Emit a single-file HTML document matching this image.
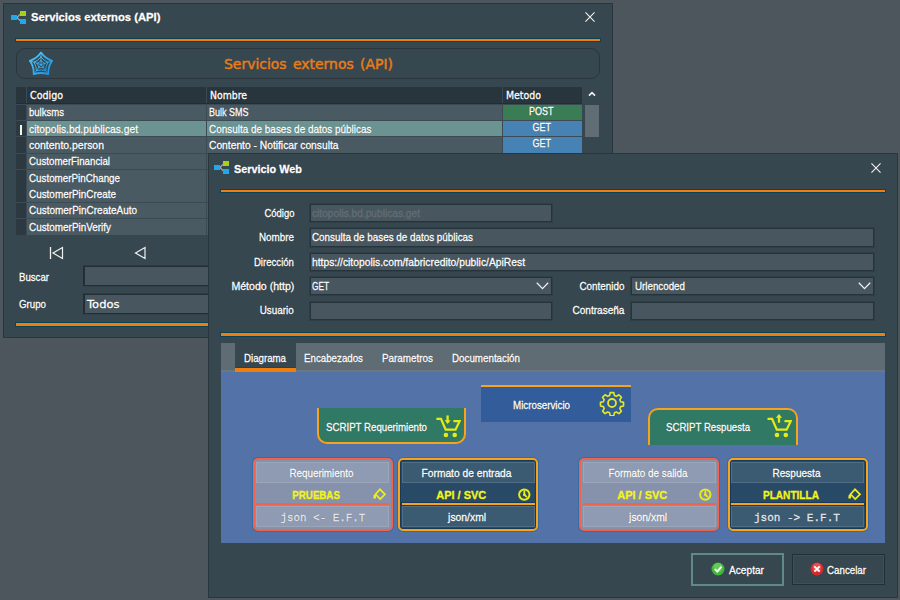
<!DOCTYPE html>
<html lang="es">
<head>
<meta charset="utf-8">
<title>Servicios externos (API)</title>
<style>
*{box-sizing:border-box;margin:0;padding:0}
html,body{width:900px;height:600px;overflow:hidden}
body{background:#4d565d;font-family:"Liberation Sans","DejaVu Sans",sans-serif;font-size:11px;color:#fff;position:relative}
body *{position:absolute}
.win{background:#37474f;border:1px solid #2a363d}
.t{white-space:nowrap;line-height:16px;height:16px;text-shadow:0 0 1px rgba(0,0,0,.6);-webkit-text-stroke:.3px currentColor;z-index:5}
.ol{height:2px;background:#f07d0c;box-shadow:0 0 0 1px rgba(10,66,86,.95)}
.inp{background:#48575f;border:1px solid #27333a;box-shadow:0 0 0 1px rgba(39,51,58,.45)}
.inp.k{border-width:1px 2px;border-color:#232f35;box-shadow:0 -1px 0 rgba(35,47,53,.5),0 1px 0 rgba(35,47,53,.25)}
.hd{background:#29353c;top:87px;height:17px}
.c{height:16px;background:#4a5a63}
.ind{background:#2c3940;left:16px;width:10px}
.c1{left:27px;width:179px}
.c2{left:207px;width:295px}
.c3{left:503px;width:79px}
.card{width:140px;height:73px;border-radius:5px;top:458px;box-shadow:0 0 0 1px rgba(28,106,168,.55)}
.card.r{background:#8691ab;border:2px solid #f0634d}
.card.o{background:#294a67;border:2px solid #f7a31c;box-shadow:0 0 0 1px rgba(28,106,168,.55),inset 0 0 0 1px #173a5a}
.card i{left:1px;width:133px;height:21px}
.card.r i{background:#8f9bb3;border:1px solid #9ca6bb}
.card.o i{background:#3b5b73;border:1px solid #506d83}
.card b{left:1px;width:133px;top:43px;height:2px}
.card.r b{background:#f0634d}
.card.o b{background:#f7a31c;box-shadow:0 0 0 1px #173a5a}
.card.s i,.card.s b{left:2px}
.btn{top:554px;height:31px;background:#37474f;border:1px solid #242f35;box-shadow:inset 0 0 0 1px rgba(70,88,96,.55)}
</style>
</head>
<body>

<!-- ================= Window 1 : Servicios externos (API) ================= -->
<div class="win" style="left:3px;top:3px;width:610px;height:335px"></div>
<svg style="left:10px;top:10px" width="17" height="15" viewBox="0 0 17 15">
  <path d="M7 7.500 L10.500 3.800 M7 7.500 L10.500 11.200" stroke="#a8b0b4" stroke-width="1.100" fill="none"/>
  <rect x="1" y="5" width="6" height="5" fill="#1ea9ea"/>
  <rect x="10" y="1" width="6" height="5" fill="#a6d01a"/>
  <rect x="10" y="9" width="6" height="5" fill="#1ea9ea"/>
</svg>
<svg style="left:585px;top:12.200px" width="10" height="10" viewBox="0 0 11 11"><path d="M0.5 0.5 L10.5 10.5 M10.5 0.5 L0.5 10.5" stroke="#f2f2f2" stroke-width="1.2" fill="none"/></svg>
<div class="ol" style="left:16px;top:39px;width:584px"></div>
<div style="left:16px;top:48px;width:584px;height:31px;border:1px solid #2a363c;border-radius:9px"></div>
<svg style="left:29px;top:51px" width="24" height="25" viewBox="0 0 24 25">
  <defs><linearGradient id="wg" x1="0" y1="0" x2="1" y2="1"><stop offset="0" stop-color="#5cc8f8"/><stop offset=".5" stop-color="#35aeee"/><stop offset="1" stop-color="#1590de"/></linearGradient></defs>
  <g fill="none" stroke="url(#wg)" stroke-linejoin="round" stroke-linecap="round">
    <path d="M12.0 1.6 Q16.2 7.7 23.1 9.8 Q18.9 15.8 19.3 23.2 Q12.0 20.8 4.7 23.2 Q5.1 15.8 0.9 9.8 Q7.8 7.7 12.0 1.6 Z" stroke-width="1.800"/>
    <path d="M12.0 5.9 Q14.7 9.8 19.1 11.2 Q16.4 15.0 16.7 19.7 Q12.0 18.2 7.3 19.7 Q7.6 15.0 4.9 11.2 Q9.3 9.8 12.0 5.9 Z" stroke-width="1"/>
    <path d="M12.0 9.6 Q13.5 11.5 15.7 12.3 Q14.4 14.4 14.4 16.8 Q12.0 16.1 9.6 16.8 Q9.6 14.4 8.3 12.3 Q10.5 11.5 12.0 9.6 Z" stroke-width=".900"/>
    <path d="M12 13.6 L12 1.6 M12 13.6 L23.1 9.8 M12 13.6 L19.3 23.2 M12 13.6 L4.7 23.2 M12 13.6 L0.9 9.8" stroke-width=".900"/>
  </g>
</svg>

<!-- table -->
<div style="left:16px;top:87px;width:566px;height:148px;background:#3c4b53"></div>
<div class="hd" style="left:16px;width:10px"></div>
<div class="hd c1"></div><div class="hd c2"></div><div class="hd c3"></div>
<div style="left:16px;top:103px;width:566px;height:1px;background:#232e34"></div>
<div class="c ind" style="top:105px;height:15px;"></div>
<div class="c c1" style="top:105px;height:15px;"></div>
<div class="c c2" style="top:105px;height:15px;"></div>
<div class="c c3" style="top:105px;height:15px;background:#3a7d55"></div>
<div class="c ind" style="top:121px;height:15px;"></div>
<div class="c c1" style="top:121px;height:15px;background:#6a9392;"></div>
<div class="c c2" style="top:121px;height:15px;background:#6a9392;"></div>
<div class="c c3" style="top:121px;height:15px;background:#4682b4"></div>
<div class="c ind" style="top:137px;height:16px;"></div>
<div class="c c1" style="top:137px;height:16px;"></div>
<div class="c c2" style="top:137px;height:16px;"></div>
<div class="c c3" style="top:137px;height:16px;background:#4682b4"></div>
<div class="c ind" style="top:154px;height:15px;"></div>
<div class="c c1" style="top:154px;height:15px;"></div>
<div class="c c2" style="top:154px;height:15px;"></div>
<div class="c ind" style="top:170px;height:16px;"></div>
<div class="c c1" style="top:170px;height:16px;"></div>
<div class="c c2" style="top:170px;height:16px;"></div>
<div class="c ind" style="top:186px;height:16px;"></div>
<div class="c c1" style="top:186px;height:16px;"></div>
<div class="c c2" style="top:186px;height:16px;"></div>
<div class="c ind" style="top:203px;height:15px;"></div>
<div class="c c1" style="top:203px;height:15px;"></div>
<div class="c c2" style="top:203px;height:15px;"></div>
<div class="c ind" style="top:219px;height:16px;"></div>
<div class="c c1" style="top:219px;height:16px;"></div>
<div class="c c2" style="top:219px;height:16px;"></div>
<div style="left:20px;top:125px;width:2px;height:10px;background:#f4f4f4"></div>
<svg style="left:588px;top:91px" width="8" height="6" viewBox="0 0 8 6"><path d="M1 4.6 L4 1.6 L7 4.6" stroke="#f0f0f0" stroke-width="1.7" fill="none"/></svg>
<div style="left:585px;top:105px;width:14px;height:32px;background:#606d74"></div>

<!-- navigator -->
<svg style="left:49px;top:246px" width="16" height="14" viewBox="0 0 16 14"><path d="M1.5 1 V13" stroke="#f0f0f0" stroke-width="1.3" fill="none"/><path d="M13.5 1.5 V12.5 L4 7 Z" stroke="#f0f0f0" stroke-width="1.2" fill="none"/></svg>
<svg style="left:133px;top:246px" width="14" height="14" viewBox="0 0 14 14"><path d="M12 1.5 V12.5 L2.500 7 Z" stroke="#f0f0f0" stroke-width="1.2" fill="none"/></svg>
<div class="inp k" style="left:83px;top:266px;width:200px;height:20px"></div>
<div class="inp k" style="left:83px;top:294px;width:200px;height:20px"></div>
<div class="ol" style="left:16px;top:323px;width:300px;height:3px"></div>

<!-- ================= Window 2 : Servicio Web ================= -->
<div class="win" style="left:208px;top:153px;width:690px;height:445px"></div>
<svg style="left:213px;top:160px" width="17" height="15" viewBox="0 0 17 15">
  <path d="M7 7.500 L10.500 3.800 M7 7.500 L10.500 11.200" stroke="#a8b0b4" stroke-width="1.100" fill="none"/>
  <rect x="1" y="5" width="6" height="5" fill="#1ea9ea"/>
  <rect x="10" y="1" width="6" height="5" fill="#a6d01a"/>
  <rect x="10" y="9" width="6" height="5" fill="#1ea9ea"/>
</svg>
<svg style="left:870.800px;top:163.200px" width="10" height="10" viewBox="0 0 11 11"><path d="M0.5 0.5 L10.5 10.5 M10.5 0.5 L0.5 10.5" stroke="#f2f2f2" stroke-width="1.2" fill="none"/></svg>
<div class="ol" style="left:221px;top:190px;width:664px"></div>

<div class="inp" style="left:310px;top:204px;width:242px;height:18px"></div>
<div class="inp" style="left:310px;top:228px;width:564px;height:19px"></div>
<div class="inp" style="left:310px;top:253px;width:564px;height:18px"></div>
<div class="inp" style="left:310px;top:277px;width:242px;height:18px"></div>
<svg style="left:536px;top:282px" width="13" height="8" viewBox="0 0 13 8"><path d="M0.8 0.8 L6.5 6.6 L12.2 0.8" stroke="#f0f0f0" stroke-width="1.3" fill="none"/></svg>
<div class="inp" style="left:631px;top:277px;width:243px;height:18px"></div>
<svg style="left:858px;top:282px" width="13" height="8" viewBox="0 0 13 8"><path d="M0.8 0.8 L6.5 6.6 L12.2 0.8" stroke="#f0f0f0" stroke-width="1.3" fill="none"/></svg>
<div class="inp" style="left:310px;top:302px;width:242px;height:18px"></div>
<div class="inp" style="left:631px;top:302px;width:243px;height:18px"></div>
<div class="ol" style="left:221px;top:333px;width:664px;height:3px"></div>

<!-- tabs -->
<div style="left:221px;top:343px;width:664px;height:29px;background:#5f6c73;border-bottom:2px solid #6c787f"></div>
<div style="left:235px;top:343px;width:61px;height:29px;background:#37474f;border-bottom:4px solid #f07d0c"></div>
<div style="left:235px;top:367px;width:61px;height:1px;background:#1d4757"></div>

<!-- diagram -->
<div style="left:221px;top:372px;width:664px;height:171px;background:#5272a8"></div>
<div style="left:317px;top:408px;width:149px;height:36px;background:#307a65;border:2px solid #f7a31c;border-top:0;border-radius:0 0 10px 10px"></div>
<svg style="left:435px;top:413px" width="26" height="26" viewBox="0 0 26 26">
  <path d="M1.4 5.900 H6 L10.700 16.700 H20.500 L24.600 8.100 H18.400" fill="none" stroke="#e6ec12" stroke-width="2.200" stroke-linejoin="miter"/>
  <path d="M12.600 2.400 V8" fill="none" stroke="#e6ec12" stroke-width="2.300"/><path d="M9.600 7.300 H15.600 L12.600 11 Z" fill="#e6ec12"/>
  <circle cx="10.900" cy="22" r="2.300" fill="#e6ec12"/><circle cx="19.700" cy="22" r="2.300" fill="#e6ec12"/>
</svg>
<div style="left:481px;top:385px;width:150px;height:37px;background:#325d9a;border-top:2px solid #f7a31c"></div>
<svg style="left:599px;top:390px" width="26" height="26" viewBox="0 0 26 26">
  <g fill="none" stroke="#e4ea1e" stroke-width="1.8" stroke-linejoin="round">
    <path d="M11 1.5 h4 l.7 3.2 l2.2 .9 l2.8 -1.8 l2.8 2.8 l-1.8 2.8 l.9 2.2 l3.2 .7 v4 l-3.2 .7 l-.9 2.2 l1.8 2.8 l-2.8 2.8 l-2.8 -1.8 l-2.2 .9 l-.7 3.2 h-4 l-.7 -3.2 l-2.2 -.9 l-2.8 1.8 l-2.8 -2.8 l1.8 -2.8 l-.9 -2.2 l-3.2 -.7 v-4 l3.2 -.7 l.9 -2.2 l-1.8 -2.8 l2.8 -2.8 l2.8 1.8 l2.2 -.9 z" transform="translate(1.3 1.3) scale(.9)"/>
    <circle cx="13" cy="13" r="4"/>
  </g>
</svg>
<div style="left:648px;top:408px;width:150px;height:37px;background:#307a65;border:2px solid #f7a31c;border-bottom:0;border-radius:10px 10px 0 0"></div>
<svg style="left:766px;top:413px" width="26" height="26" viewBox="0 0 26 26">
  <path d="M1.500 5.900 H6.100 L10.800 16.700 H20.600 L24.700 8.100 H18.500" fill="none" stroke="#e6ec12" stroke-width="2.200" stroke-linejoin="miter"/>
  <path d="M13 4 V9.700" fill="none" stroke="#e6ec12" stroke-width="2.300"/><path d="M9.900 4.700 H16.100 L13 1 Z" fill="#e6ec12"/>
  <circle cx="11" cy="22" r="2.300" fill="#e6ec12"/><circle cx="19.800" cy="22" r="2.300" fill="#e6ec12"/>
</svg>

<div class="card r" style="left:253px"><i style="top:2px"></i><b></b><i style="top:46px"></i>
  <svg style="left:117px;top:28px" width="15" height="13" viewBox="0 0 15 13"><path d="M8 1.3 L13 6.3 L8.2 11.1 L3.6 6.3 Z" fill="none" stroke="#eef014" stroke-width="1.7" stroke-linejoin="miter"/><path d="M3.6 5.6 L1.6 7.2 L1.3 10.6 L3.9 10.6 L4.1 7.4 Z" fill="#eef014"/></svg></div>
<div class="card o s" style="left:398px"><i style="top:2px"></i><b></b><i style="top:46px"></i>
  <svg style="left:117px;top:28px" width="15" height="15" viewBox="0 0 15 15"><circle cx="7.3" cy="6.6" r="5.2" fill="none" stroke="#e8ec14" stroke-width="2"/><path d="M7.3 3.2 V6.8 L9.4 8.6" fill="none" stroke="#e8ec14" stroke-width="1.8" stroke-linecap="round"/><circle cx="7.3" cy="6.8" r="1.3" fill="#e8ec14"/></svg></div>
<div class="card r s" style="left:579px"><i style="top:2px"></i><b></b><i style="top:46px"></i>
  <svg style="left:117px;top:28px" width="15" height="15" viewBox="0 0 15 15"><circle cx="7.3" cy="6.6" r="5.2" fill="none" stroke="#e8ec14" stroke-width="2"/><path d="M7.3 3.2 V6.8 L9.4 8.6" fill="none" stroke="#e8ec14" stroke-width="1.8" stroke-linecap="round"/><circle cx="7.3" cy="6.8" r="1.3" fill="#e8ec14"/></svg></div>
<div class="card o" style="left:728px"><i style="top:2px"></i><b></b><i style="top:46px"></i>
  <svg style="left:117px;top:28px" width="15" height="13" viewBox="0 0 15 13"><path d="M8 1.3 L13 6.3 L8.2 11.1 L3.6 6.3 Z" fill="none" stroke="#eef014" stroke-width="1.7" stroke-linejoin="miter"/><path d="M3.6 5.6 L1.6 7.2 L1.3 10.6 L3.9 10.6 L4.1 7.4 Z" fill="#eef014"/></svg></div>

<!-- buttons -->
<div class="btn" style="left:691px;top:553px;height:33px;width:93px;border:2px solid #618988;box-shadow:none"></div>
<svg style="left:710.8px;top:561.7px" width="14" height="14" viewBox="0 0 14 14"><circle cx="7" cy="7" r="6.5" fill="#3fb83a"/><circle cx="7" cy="5.5" r="4.5" fill="#7fdc6c" opacity=".55"/><path d="M3.8 7.2 L6.2 9.6 L10.4 4.600" stroke="#fff" stroke-width="1.8" fill="none"/></svg>
<div class="btn" style="left:792px;width:93px"></div>
<svg style="left:809.6px;top:561.7px" width="14" height="14" viewBox="0 0 14 14"><circle cx="7" cy="7" r="6.5" fill="#d7282c"/><circle cx="7" cy="5.5" r="4.5" fill="#f07a78" opacity=".5"/><path d="M4.3 4.3 L9.7 9.7 M9.7 4.3 L4.3 9.7" stroke="#fff" stroke-width="1.8" fill="none"/></svg>

<!-- ================= text layer ================= -->
<div class="t" style="left:31.20px;top:9.02px;font-family:'Liberation Sans','DejaVu Sans',sans-serif;font-size:11.5px;font-weight:bold;transform:scaleX(0.9787);transform-origin:0 50%;">Servicios externos (API)</div>
<div class="t" style="left:224.00px;top:56.16px;font-family:'DejaVu Sans','Liberation Sans',sans-serif;font-size:14px;word-spacing:2px;-webkit-text-stroke:0.45px currentColor;transform:scaleX(0.9949);transform-origin:0 50%;color:#ea7c16;text-shadow:none;">Servicios externos (API)</div>
<div class="t" style="left:30.00px;top:87.37px;font-family:'DejaVu Sans','Liberation Sans',sans-serif;font-size:10.5px;transform:scaleX(0.9057);transform-origin:0 50%;">Codigo</div>
<div class="t" style="left:210.00px;top:87.37px;font-family:'DejaVu Sans','Liberation Sans',sans-serif;font-size:10.5px;transform:scaleX(0.8869);transform-origin:0 50%;">Nombre</div>
<div class="t" style="left:506.00px;top:87.37px;font-family:'DejaVu Sans','Liberation Sans',sans-serif;font-size:10.5px;transform:scaleX(0.8939);transform-origin:0 50%;">Metodo</div>
<div class="t" style="left:29.40px;top:104.32px;font-family:'Liberation Sans','DejaVu Sans',sans-serif;font-size:11.5px;transform:scaleX(0.8296);transform-origin:0 50%;">bulksms</div>
<div class="t" style="left:208.70px;top:104.32px;font-family:'Liberation Sans','DejaVu Sans',sans-serif;font-size:11.5px;transform:scaleX(0.7822);transform-origin:0 50%;">Bulk SMS</div>
<div class="t" style="left:527.00px;top:103.06px;font-family:'Liberation Sans','DejaVu Sans',sans-serif;font-size:10.5px;transform:scaleX(0.8568);transform-origin:50% 50%;">POST</div>
<div class="t" style="left:29.40px;top:120.67px;font-family:'Liberation Sans','DejaVu Sans',sans-serif;font-size:11.5px;transform:scaleX(0.8926);transform-origin:0 50%;">citopolis.bd.publicas.get</div>
<div class="t" style="left:208.70px;top:120.67px;font-family:'Liberation Sans','DejaVu Sans',sans-serif;font-size:11.5px;transform:scaleX(0.8645);transform-origin:0 50%;">Consulta de bases de datos públicas</div>
<div class="t" style="left:531.10px;top:119.26px;font-family:'Liberation Sans','DejaVu Sans',sans-serif;font-size:10.5px;transform:scaleX(0.8567);transform-origin:50% 50%;">GET</div>
<div class="t" style="left:29.40px;top:137.02px;font-family:'Liberation Sans','DejaVu Sans',sans-serif;font-size:11.5px;transform:scaleX(0.9093);transform-origin:0 50%;">contento.person</div>
<div class="t" style="left:208.70px;top:137.02px;font-family:'Liberation Sans','DejaVu Sans',sans-serif;font-size:11.5px;transform:scaleX(0.8924);transform-origin:0 50%;">Contento - Notificar consulta</div>
<div class="t" style="left:531.10px;top:135.46px;font-family:'Liberation Sans','DejaVu Sans',sans-serif;font-size:10.5px;transform:scaleX(0.8567);transform-origin:50% 50%;">GET</div>
<div class="t" style="left:29.40px;top:153.37px;font-family:'Liberation Sans','DejaVu Sans',sans-serif;font-size:11.5px;transform:scaleX(0.8449);transform-origin:0 50%;">CustomerFinancial</div>
<div class="t" style="left:29.40px;top:169.72px;font-family:'Liberation Sans','DejaVu Sans',sans-serif;font-size:11.5px;transform:scaleX(0.8523);transform-origin:0 50%;">CustomerPinChange</div>
<div class="t" style="left:29.40px;top:186.07px;font-family:'Liberation Sans','DejaVu Sans',sans-serif;font-size:11.5px;transform:scaleX(0.8615);transform-origin:0 50%;">CustomerPinCreate</div>
<div class="t" style="left:29.40px;top:202.42px;font-family:'Liberation Sans','DejaVu Sans',sans-serif;font-size:11.5px;transform:scaleX(0.8664);transform-origin:0 50%;">CustomerPinCreateAuto</div>
<div class="t" style="left:29.40px;top:218.77px;font-family:'Liberation Sans','DejaVu Sans',sans-serif;font-size:11.5px;transform:scaleX(0.8610);transform-origin:0 50%;">CustomerPinVerify</div>
<div class="t" style="left:19.00px;top:269.02px;font-family:'Liberation Sans','DejaVu Sans',sans-serif;font-size:11.5px;transform:scaleX(0.8381);transform-origin:0 50%;">Buscar</div>
<div class="t" style="left:19.00px;top:296.02px;font-family:'Liberation Sans','DejaVu Sans',sans-serif;font-size:11.5px;transform:scaleX(0.8446);transform-origin:0 50%;">Grupo</div>
<div class="t" style="left:87.30px;top:296.17px;font-family:'DejaVu Sans','Liberation Sans',sans-serif;font-size:10.5px;transform:scaleX(1.0970);transform-origin:0 50%;">Todos</div>
<div class="t" style="left:234.00px;top:160.72px;font-family:'Liberation Sans','DejaVu Sans',sans-serif;font-size:11.5px;font-weight:bold;transform:scaleX(0.9442);transform-origin:0 50%;">Servicio Web</div>
<div class="t" style="left:257.55px;top:205.02px;font-family:'Liberation Sans','DejaVu Sans',sans-serif;font-size:11.5px;transform:scaleX(0.8230);transform-origin:100% 50%;">Código</div>
<div class="t" style="left:253.09px;top:229.02px;font-family:'Liberation Sans','DejaVu Sans',sans-serif;font-size:11.5px;transform:scaleX(0.8556);transform-origin:100% 50%;">Nombre</div>
<div class="t" style="left:246.06px;top:254.02px;font-family:'Liberation Sans','DejaVu Sans',sans-serif;font-size:11.5px;transform:scaleX(0.8344);transform-origin:100% 50%;">Dirección</div>
<div class="t" style="left:225.59px;top:278.02px;font-family:'Liberation Sans','DejaVu Sans',sans-serif;font-size:11.5px;transform:scaleX(0.9210);transform-origin:100% 50%;">Método (http)</div>
<div class="t" style="left:254.36px;top:302.02px;font-family:'Liberation Sans','DejaVu Sans',sans-serif;font-size:11.5px;transform:scaleX(0.8577);transform-origin:100% 50%;">Usuario</div>
<div class="t" style="left:571.56px;top:278.02px;font-family:'Liberation Sans','DejaVu Sans',sans-serif;font-size:11.5px;transform:scaleX(0.8582);transform-origin:100% 50%;">Contenido</div>
<div class="t" style="left:564.53px;top:302.02px;font-family:'Liberation Sans','DejaVu Sans',sans-serif;font-size:11.5px;transform:scaleX(0.8744);transform-origin:100% 50%;">Contraseña</div>
<div class="t" style="left:311.80px;top:205.02px;font-family:'Liberation Sans','DejaVu Sans',sans-serif;font-size:11.5px;transform:scaleX(0.8845);transform-origin:0 50%;color:#626e75;text-shadow:none;">citopolis.bd.publicas.get</div>
<div class="t" style="left:311.80px;top:229.02px;font-family:'Liberation Sans','DejaVu Sans',sans-serif;font-size:11.5px;transform:scaleX(0.8565);transform-origin:0 50%;">Consulta de bases de datos públicas</div>
<div class="t" style="left:311.80px;top:254.02px;font-family:'Liberation Sans','DejaVu Sans',sans-serif;font-size:11.5px;transform:scaleX(0.8958);transform-origin:0 50%;">https://citopolis.com/fabricredito/public/ApiRest</div>
<div class="t" style="left:311.80px;top:278.02px;font-family:'Liberation Sans','DejaVu Sans',sans-serif;font-size:11.5px;transform:scaleX(0.7191);transform-origin:0 50%;">GET</div>
<div class="t" style="left:635.00px;top:278.02px;font-family:'Liberation Sans','DejaVu Sans',sans-serif;font-size:11.5px;transform:scaleX(0.8499);transform-origin:0 50%;">Urlencoded</div>
<div class="t" style="left:244.00px;top:350.02px;font-family:'Liberation Sans','DejaVu Sans',sans-serif;font-size:11.5px;transform:scaleX(0.8424);transform-origin:0 50%;">Diagrama</div>
<div class="t" style="left:304.00px;top:350.02px;font-family:'Liberation Sans','DejaVu Sans',sans-serif;font-size:11.5px;transform:scaleX(0.8464);transform-origin:0 50%;">Encabezados</div>
<div class="t" style="left:382.00px;top:350.02px;font-family:'Liberation Sans','DejaVu Sans',sans-serif;font-size:11.5px;transform:scaleX(0.8580);transform-origin:0 50%;">Parametros</div>
<div class="t" style="left:452.00px;top:350.02px;font-family:'Liberation Sans','DejaVu Sans',sans-serif;font-size:11.5px;transform:scaleX(0.8510);transform-origin:0 50%;">Documentación</div>
<div class="t" style="left:326.30px;top:419.02px;font-family:'Liberation Sans','DejaVu Sans',sans-serif;font-size:11.5px;transform:scaleX(0.8420);transform-origin:0 50%;">SCRIPT Requerimiento</div>
<div class="t" style="left:513.00px;top:397.02px;font-family:'Liberation Sans','DejaVu Sans',sans-serif;font-size:11.5px;transform:scaleX(0.8496);transform-origin:0 50%;">Microservicio</div>
<div class="t" style="left:666.00px;top:419.02px;font-family:'Liberation Sans','DejaVu Sans',sans-serif;font-size:11.5px;transform:scaleX(0.8388);transform-origin:0 50%;">SCRIPT Respuesta</div>
<div class="t" style="left:283.90px;top:464.72px;font-family:'Liberation Sans','DejaVu Sans',sans-serif;font-size:11.5px;transform:scaleX(0.8557);transform-origin:50% 50%;">Requerimiento</div>
<div class="t" style="left:288.38px;top:487.02px;font-family:'Liberation Sans','DejaVu Sans',sans-serif;font-size:11.5px;font-weight:bold;transform:scaleX(0.8447);transform-origin:50% 50%;color:#f4f41c;text-shadow:none;">PRUEBAS</div>
<div class="t" style="left:279.59px;top:510.07px;font-family:'Liberation Mono','DejaVu Sans Mono',monospace;font-size:11px;transform:scaleX(0.9904);transform-origin:50% 50%;color:#e8e8ee;">json &lt;- E.F.T</div>
<div class="t" style="left:415.79px;top:464.72px;font-family:'Liberation Sans','DejaVu Sans',sans-serif;font-size:11.5px;transform:scaleX(0.8910);transform-origin:50% 50%;">Formato de entrada</div>
<div class="t" style="left:434.80px;top:487.02px;font-family:'Liberation Sans','DejaVu Sans',sans-serif;font-size:11.5px;font-weight:bold;transform:scaleX(0.9541);transform-origin:50% 50%;color:#f4f41c;text-shadow:none;">API / SVC</div>
<div class="t" style="left:445.91px;top:509.02px;font-family:'Liberation Sans','DejaVu Sans',sans-serif;font-size:11.5px;transform:scaleX(0.9007);transform-origin:50% 50%;">json/xml</div>
<div class="t" style="left:602.28px;top:464.72px;font-family:'Liberation Sans','DejaVu Sans',sans-serif;font-size:11.5px;transform:scaleX(0.8583);transform-origin:50% 50%;">Formato de salida</div>
<div class="t" style="left:615.80px;top:487.02px;font-family:'Liberation Sans','DejaVu Sans',sans-serif;font-size:11.5px;font-weight:bold;transform:scaleX(0.9541);transform-origin:50% 50%;color:#f4f41c;text-shadow:none;">API / SVC</div>
<div class="t" style="left:626.91px;top:509.02px;font-family:'Liberation Sans','DejaVu Sans',sans-serif;font-size:11.5px;transform:scaleX(0.9007);transform-origin:50% 50%;">json/xml</div>
<div class="t" style="left:768.81px;top:464.72px;font-family:'Liberation Sans','DejaVu Sans',sans-serif;font-size:11.5px;transform:scaleX(0.8730);transform-origin:50% 50%;">Respuesta</div>
<div class="t" style="left:758.55px;top:487.02px;font-family:'Liberation Sans','DejaVu Sans',sans-serif;font-size:11.5px;font-weight:bold;transform:scaleX(0.8765);transform-origin:50% 50%;color:#f4f41c;text-shadow:none;">PLANTILLA</div>
<div class="t" style="left:754.09px;top:510.07px;font-family:'Liberation Mono','DejaVu Sans Mono',monospace;font-size:11px;transform:scaleX(1.0020);transform-origin:50% 50%;color:#e8e8ee;">json -&gt; E.F.T</div>
<div class="t" style="left:729.00px;top:562.02px;font-family:'Liberation Sans','DejaVu Sans',sans-serif;font-size:11.5px;transform:scaleX(0.8829);transform-origin:0 50%;">Aceptar</div>
<div class="t" style="left:827.00px;top:562.02px;font-family:'Liberation Sans','DejaVu Sans',sans-serif;font-size:11.5px;transform:scaleX(0.8473);transform-origin:0 50%;">Cancelar</div>
</body>
</html>
